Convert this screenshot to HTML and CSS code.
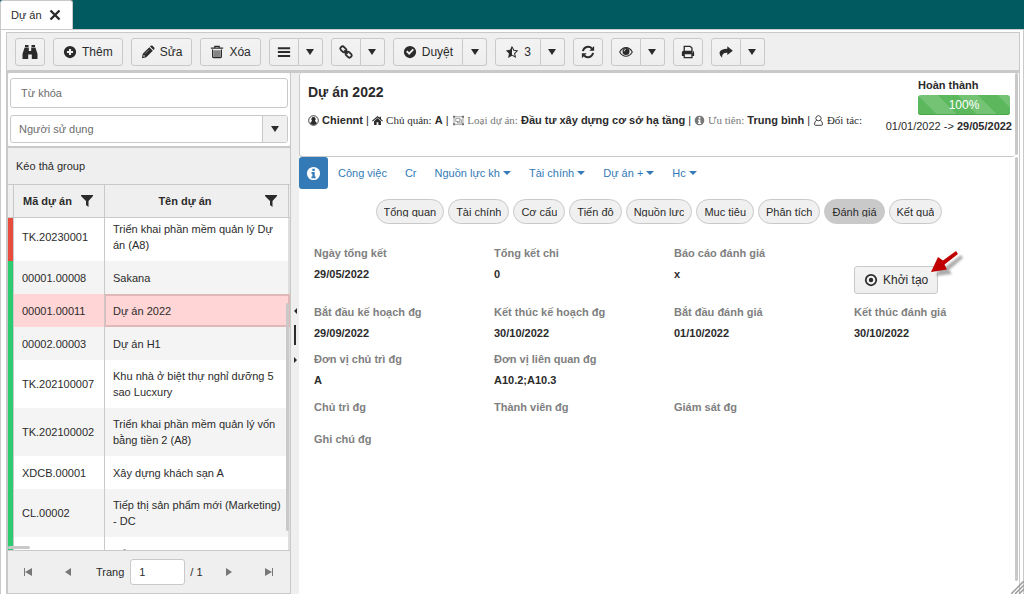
FILE: index.html
```html
<!DOCTYPE html>
<html lang="vi">
<head>
<meta charset="utf-8">
<title>Dự án</title>
<link rel="stylesheet" href="styles.css">
</head>
<body>
<svg class="defs" aria-hidden="true">
  <symbol id="i-search" viewBox="0 0 16 16"><path d="M3 1h3.500v2H3zM9.500 1H13v2H9.500zM2.600 3.600h4.200V7h2.400V3.600h4.200L15.500 10v5H9.800v-4.500H6.200V15H.5v-5z"/></symbol>
  <symbol id="i-plus" viewBox="0 0 16 16"><path fill-rule="evenodd" d="M8 1a7 7 0 1 0 0 14A7 7 0 0 0 8 1zm-1.200 3.500h2.400v2.300h2.300v2.400H9.200v2.300H6.800V9.200H4.500V6.800h2.300z"/></symbol>
  <symbol id="i-pencil" viewBox="0 0 16 16"><path fill-rule="evenodd" d="M1 15l1-5 7.500-7.500 4 4L6 14zm1.600-1.600 2.200-.6-1.600-1.600zM10.300 1.700l.8-.8q1-.8 2 0l2 2q.8 1 0 2l-.8.8z"/><path d="M4.500 10 9 5.500" stroke="#aaa" stroke-width=".8"/></symbol>
  <symbol id="i-trash" viewBox="0 0 16 16"><path d="M1 3.500h14M5.500 3V1.500h5V3M3 5v8q0 1.500 1.500 1.500h7Q13 14.500 13 13V5" fill="none" stroke="currentColor" stroke-width="1.400"/><path d="M4 6h8v8H4z" opacity=".55"/></symbol>
  <symbol id="i-bars" viewBox="0 0 16 16"><path d="M1 2.500h14v2.300H1zM1 6.900h14v2.300H1zM1 11.300h14v2.300H1z"/></symbol>
  <symbol id="i-link" viewBox="0 0 16 16"><g fill="none" stroke="currentColor" stroke-width="2"><rect x="1.200" y="2.500" width="7.500" height="5" rx="2.500" transform="rotate(45 5 5)"/><rect x="7.300" y="8.500" width="7.500" height="5" rx="2.500" transform="rotate(45 11 11)"/><path d="M6 6l4 4"/></g></symbol>
  <symbol id="i-check" viewBox="0 0 16 16"><path fill-rule="evenodd" d="M8 1a7 7 0 1 0 0 14A7 7 0 0 0 8 1zM3.500 7.800 5 6.300l2 2 4-4 1.500 1.500L7 11.300z"/></symbol>
  <symbol id="i-star" viewBox="0 0 16 16"><path d="M8 .8v11.500l-4.400 2.500.9-5L1 6.200l4.900-.7z"/><path d="M8 2l2 4 4 .6-3 2.900.8 4.200L8 11.600" fill="none" stroke="currentColor" stroke-width="1.200"/></symbol>
  <symbol id="i-refresh" viewBox="0 0 16 16"><path d="M2.200 7A6 6 0 0 1 12.500 4M13.800 9A6 6 0 0 1 3.500 12" fill="none" stroke="currentColor" stroke-width="2.200"/><path d="M15 1v5.500H9.500zM1 15V9.500h5.500z"/></symbol>
  <symbol id="i-eye" viewBox="0 0 16 16"><path d="M.8 8Q3.500 3 8 3T15.200 8Q12.500 12.800 8 12.800T.8 8z" fill="none" stroke="currentColor" stroke-width="1.200"/><path fill-rule="evenodd" d="M8 3.300a4 4 0 1 0 0 8 4 4 0 0 0 0-8zm0 1.200v1Q6.400 5.600 6.300 7.200h-1Q5.500 4.600 8 4.500z"/></symbol>
  <symbol id="i-print" viewBox="0 0 16 16"><path d="M3.700 7.500v-6h6.800l2 2v4M3.700 10.500v4h8.800v-4" fill="none" stroke="currentColor" stroke-width="1.500"/><path fill-rule="evenodd" d="M3 6.500h10q2 0 2 2v4h-2.500v-2h-9v2H1v-4q0-2 2-2zm9.500 1v1.200h1.200V7.500z"/></symbol>
  <symbol id="i-share" viewBox="0 0 16 16"><path d="M9.500 1.500 15.800 6.500l-6.300 5V8.800Q3 8.500 3.500 14.500.2 12 .6 8.500 2 4.200 9.500 4.200z"/></symbol>
  <symbol id="i-filter" viewBox="0 0 12 12"><path d="M0 0h12v1L7.500 6v6L5 10V6L0 1z"/></symbol>
  <symbol id="i-down" viewBox="0 0 8 6"><path d="M0 0h8L4 6z"/></symbol>
  <symbol id="i-caret" viewBox="0 0 8 4"><path d="M0 0h8L4 4z"/></symbol>
  <symbol id="i-close" viewBox="0 0 12 12"><path d="M1.500 1.500l9 9M10.500 1.500l-9 9" stroke="currentColor" stroke-width="2.400"/></symbol>
  <symbol id="i-info" viewBox="0 0 16 16"><path fill-rule="evenodd" d="M8 1a7 7 0 1 0 0 14A7 7 0 0 0 8 1zM6.800 3h2.500v2.300H6.800zM5.800 6.500h3.500v4.700h1V13H5.800v-1.800h1V8.300h-1z"/></symbol>
  <symbol id="i-user" viewBox="0 0 16 16"><circle cx="8" cy="8" r="7" fill="none" stroke="currentColor" stroke-width="1.300"/><path d="M8 3a3.200 3.200 0 0 0-2 5.700Q3.500 9.500 3.300 12.500 5 14.500 8 14.500t4.700-2Q12.500 9.500 10 8.700A3.200 3.200 0 0 0 8 3z"/></symbol>
  <symbol id="i-home" viewBox="0 0 16 16"><path d="M8 1.500l3 2.600V2.500h2v3.300l3 2.500-1 1.200-7-6-7 6-1-1.200zM8 4.500l5 4.500v5.500H9.300v-4H6.700v4H3V9z"/></symbol>
  <symbol id="i-group" viewBox="0 0 16 16"><g fill="none" stroke="currentColor"><path d="M1.500 2.500h13v11h-13zM4 5h6v4.500H4zM10 7h2.500v4.500h-6v-2"/></g><path d="M0 1h3v3H0zM13 1h3v3h-3zM0 12h3v3H0zM13 12h3v3h-3z"/></symbol>
  <symbol id="i-person" viewBox="0 0 16 16"><path d="M5.500 7.700a3.800 3.800 0 1 1 5 0M5.500 7.500Q8 9.500 10.500 7.500 14 9 13.800 13.500q0 1.500-1.800 1.500H4q-1.800 0-1.800-1.500Q2 9 5.500 7.500z" fill="none" stroke="currentColor" stroke-width="1.300"/></symbol>
  <symbol id="i-dot" viewBox="0 0 16 16"><circle cx="8" cy="8" r="6" fill="none" stroke="currentColor" stroke-width="2"/><circle cx="8" cy="8" r="2.500"/></symbol>
</svg>
<div class="app">
  <header class="topbar">
    <div class="tab"><span>Dự án</span><button class="tab-close" aria-label="Đóng"><svg><use href="#i-close"/></svg></button></div>
  </header>
  <div class="window">
    <div class="toolbar">
      <button class="btn" aria-label="Tìm kiếm"><svg class="big"><use href="#i-search"/></svg></button>
      <button class="btn text"><svg><use href="#i-plus"/></svg>Thêm</button>
      <button class="btn text"><svg><use href="#i-pencil"/></svg>Sửa</button>
      <button class="btn text"><svg><use href="#i-trash"/></svg>Xóa</button>
      <div class="split"><button class="btn" aria-label="Danh sách"><svg><use href="#i-bars"/></svg></button><button class="btn arrow" aria-label="Mở"><svg><use href="#i-down"/></svg></button></div>
      <div class="split"><button class="btn" aria-label="Liên kết"><svg><use href="#i-link"/></svg></button><button class="btn arrow" aria-label="Mở"><svg><use href="#i-down"/></svg></button></div>
      <div class="split"><button class="btn text"><svg><use href="#i-check"/></svg>Duyệt</button><button class="btn arrow" aria-label="Mở"><svg><use href="#i-down"/></svg></button></div>
      <div class="split"><button class="btn text"><svg><use href="#i-star"/></svg>3</button><button class="btn arrow" aria-label="Mở"><svg><use href="#i-down"/></svg></button></div>
      <button class="btn" aria-label="Làm mới"><svg><use href="#i-refresh"/></svg></button>
      <div class="split"><button class="btn" aria-label="Xem"><svg><use href="#i-eye"/></svg></button><button class="btn arrow" aria-label="Mở"><svg><use href="#i-down"/></svg></button></div>
      <button class="btn" aria-label="In"><svg><use href="#i-print"/></svg></button>
      <div class="split"><button class="btn" aria-label="Chia sẻ"><svg><use href="#i-share"/></svg></button><button class="btn arrow" aria-label="Mở"><svg><use href="#i-down"/></svg></button></div>
    </div>
    <div class="body">
      <aside class="side">
        <div class="search">
          <input class="keyword" type="text" placeholder="Từ khóa" aria-label="Từ khóa">
          <div class="combo"><input type="text" placeholder="Người sử dụng" aria-label="Người sử dụng"><button aria-label="Chọn"><svg><use href="#i-down"/></svg></button></div>
        </div>
        <div class="group">Kéo thả group</div>
        <div class="grid-head">
          <div class="h-stripe"></div>
          <div class="h-code"><span>Mã dự án</span><svg><use href="#i-filter"/></svg></div>
          <div class="h-name"><span>Tên dự án</span><svg><use href="#i-filter"/></svg></div>
        </div>
        <div class="rows">
          <table>
            <tbody>
            <tr><td class="stripe red"></td><td class="code">TK.20230001</td><td class="name">Triển khai phần mềm quản lý Dự án (A8)</td></tr>
            <tr><td class="stripe"></td><td class="code">00001.00008</td><td class="name">Sakana</td></tr>
            <tr class="selected"><td class="stripe"></td><td class="code">00001.00011</td><td class="name">Dự án 2022</td></tr>
            <tr><td class="stripe"></td><td class="code">00002.00003</td><td class="name">Dự án H1</td></tr>
            <tr><td class="stripe"></td><td class="code">TK.202100007</td><td class="name">Khu nhà ở biệt thự nghỉ dưỡng 5 sao Lucxury</td></tr>
            <tr><td class="stripe"></td><td class="code">TK.202100002</td><td class="name">Triển khai phần mềm quản lý vốn bằng tiền 2 (A8)</td></tr>
            <tr><td class="stripe"></td><td class="code">XDCB.00001</td><td class="name">Xây dựng khách sạn A</td></tr>
            <tr><td class="stripe"></td><td class="code">CL.00002</td><td class="name">Tiếp thị sản phẩm mới (Marketing) - DC</td></tr>
            <tr><td class="stripe"></td><td class="code"></td><td class="name">Tổng</td></tr>
            </tbody>
          </table>
          <i class="thumb-v"></i><i class="thumb-h"></i>
        </div>
        <div class="pager">
          <button aria-label="Trang đầu"><svg viewBox="0 0 8 8"><path d="M0 0h1v8H0zM8 0v8L1 4z"/></svg></button>
          <button aria-label="Trang trước"><svg viewBox="0 0 8 8"><path d="M7 0v8L1 4z"/></svg></button>
          <label for="page">Trang</label><input id="page" type="text" value="1"><span>/ 1</span>
          <button class="next" aria-label="Trang sau"><svg viewBox="0 0 8 8"><path d="M1 0v8l6-4z"/></svg></button>
          <button aria-label="Trang cuối"><svg viewBox="0 0 8 8"><path d="M7 0h1v8H7zM0 0v8l7-4z"/></svg></button>
        </div>
      </aside>
      <div class="splitter"><svg viewBox="0 0 8 60"><path d="M6 3v6L3 6zM3 52v6l3-3zM3 20h2v20H3z"/></svg></div>
      <main class="detail">
        <section class="summary">
          <div class="headline">
            <h1>Dự án 2022</h1>
            <div class="meta">
              <svg><use href="#i-user"/></svg> <b>Chiennt</b> | <svg><use href="#i-home"/></svg> <span class="serif">Chủ quản:</span> <b>A</b> | <span class="serif soft"><svg class="wide"><use href="#i-group"/></svg> Loại dự án:</span> <b>Đầu tư xây dựng cơ sở hạ tầng</b> | <span class="serif soft"><svg><use href="#i-info"/></svg> Ưu tiên:</span> <b>Trung bình</b> | <span class="serif"><svg><use href="#i-person"/></svg> Đối tác:</span>
            </div>
          </div>
          <div class="status">
            <b>Hoàn thành</b>
            <div class="progress">100%</div>
            <div class="dates">01/01/2022 -&gt; <b>29/05/2022</b></div>
          </div>
        </section>
        <nav class="nav">
          <a href="#" class="active" aria-label="Thông tin"><svg><use href="#i-info"/></svg></a>
          <a href="#">Công việc</a><a href="#">Cr</a>
          <a href="#">Nguồn lực kh<svg class="caret"><use href="#i-caret"/></svg></a>
          <a href="#">Tài chính<svg class="caret"><use href="#i-caret"/></svg></a>
          <a href="#">Dự án +<svg class="caret"><use href="#i-caret"/></svg></a>
          <a href="#">Hc<svg class="caret"><use href="#i-caret"/></svg></a>
        </nav>
        <div class="pills">
          <button><span>Tổng quan</span></button><button><span>Tài chính</span></button><button><span>Cơ cấu</span></button><button><span>Tiến độ</span></button><button><span>Nguồn lực</span></button><button><span>Mục tiêu</span></button><button><span>Phân tích</span></button><button class="on"><span>Đánh giá</span></button><button><span>Kết quả</span></button>
        </div>
        <dl class="fields">
          <div><dt>Ngày tổng kết</dt><dd>29/05/2022</dd></div>
          <div><dt>Tổng kết chi</dt><dd>0</dd></div>
          <div><dt>Báo cáo đánh giá</dt><dd>x</dd></div>
          <div class="action"><button class="btn text"><svg><use href="#i-dot"/></svg>Khởi tạo</button>
            <svg class="pointer" viewBox="0 0 36 34"><path d="M27 1 11 13 8 8 2 22l16-2-3-4L29 4z" fill="#777" opacity=".6" transform="translate(4 4)" class="shade"/><path d="M26 1 13 10.500 8 7 1 22 17 19.500 14.500 14.500 28 4z" fill="#c00000"/></svg></div>
          <div><dt>Bắt đầu kế hoạch đg</dt><dd>29/09/2022</dd></div>
          <div><dt>Kết thúc kế hoạch đg</dt><dd>30/10/2022</dd></div>
          <div><dt>Bắt đầu đánh giá</dt><dd>01/10/2022</dd></div>
          <div><dt>Kết thúc đánh giá</dt><dd>30/10/2022</dd></div>
          <div><dt>Đơn vị chủ trì đg</dt><dd>A</dd></div>
          <div class="span"><dt>Đơn vị liên quan đg</dt><dd>A10.2;A10.3</dd></div>
          <div><dt>Chủ trì đg</dt></div>
          <div><dt>Thành viên đg</dt></div>
          <div class="end"><dt>Giám sát đg</dt></div>
          <div><dt>Ghi chú đg</dt></div>
        </dl>
        <i class="bar top"></i><i class="bar"></i>
      </main>
    </div>
  </div>
  <svg class="grip" viewBox="0 0 13 13"><path d="M0 13 13 0M4 13l9-9M8 13l5-5" stroke="#999" stroke-width="1.500"/></svg>
</div>
</body>
</html>
```
FILE: styles.css
```css
* { box-sizing: border-box; }
body { margin: 0; background: #fff; color: #2b2b2b; font: 11px/16px "Liberation Sans", Arial, sans-serif; }
svg { fill: currentColor; }
button, input { font: inherit; color: inherit; margin: 0; padding: 0; border: 0; background: none; }
.defs { display: none; }
.app { height: 100vh; display: flex; flex-direction: column; overflow: hidden; position: relative; }
.topbar { background: #005a60; height: 29px; flex: none; display: flex; }
.tab { background: #fff; width: 73px; border: 1px solid #c9c9c9; border-bottom: 0; border-radius: 3px 3px 0 0; display: flex; align-items: center; gap: 7px; padding-left: 10px; }
.tab-close { width: 12px; height: 12px; }
.tab-close svg { width: 12px; height: 12px; display: block; }
.window { flex: 1; min-height: 0; display: flex; flex-direction: column; border: 1px solid #c9c9c9; border-bottom: 0; padding: 2px 3px 0 5px; }
.toolbar { flex: none; height: 41px; border: 1px solid #c9c9c9; border-bottom: 3px solid #c9c9c9; background: #efefef; display: flex; align-items: center; gap: 8px; padding: 0 8px; }
.btn { height: 28px; min-width: 30px; border: 1px solid #c9c9c9; border-radius: 3px; background: linear-gradient(#f3f3f3, #eee); display: flex; align-items: center; justify-content: center; gap: 5px; padding: 0 6px; font-size: 12px; white-space: nowrap; }
.btn.text { padding: 0 9px; }
.btn svg { width: 14px; height: 14px; flex: none; }
.btn svg.big { width: 16px; height: 16px; }
.split { display: flex; }
.split .btn:first-child { border-radius: 3px 0 0 3px; }
.split .arrow { min-width: 24px; border-left: 0; border-radius: 0 3px 3px 0; }
.btn.arrow svg { width: 8px; height: 6px; }
.body { flex: 1; min-height: 0; display: flex; background: #fff; border-right: 1px solid #c9c9c9; padding-right: 1px; }
.side { width: 285px; flex: none; display: flex; flex-direction: column; border: solid #c9c9c9; border-width: 0 1px 1px 2px; background: #efefef; }
.search { background: #fff; padding: 5px 2px 3px; display: flex; flex-direction: column; gap: 7px; border-radius: 3px; }
.keyword { height: 30px; border: 1px solid #c9c9c9; border-radius: 3px; padding: 0 10px; }
.combo { height: 28px; border: 1px solid #c9c9c9; border-radius: 3px; display: flex; overflow: hidden; }
.combo input { flex: 1; min-width: 0; padding: 0 8px; }
.combo button { width: 25px; border-left: 1px solid #c9c9c9; background: #f0f0f0; display: grid; place-items: center; }
.combo svg { width: 8px; height: 6px; }
::placeholder { color: #6c6c6c; opacity: 1; }
input:focus { outline: none; }
.group { height: 38px; flex: none; border-top: 2px solid #c9c9c9; padding: 10px 8px 0; }
.grid-head { height: 34px; flex: none; border: solid #c9c9c9; border-width: 1px 0; display: flex; font-weight: bold; }
.grid-head svg { width: 12px; height: 12px; flex: none; }
.h-stripe { width: 6px; border-right: 1px solid #c9c9c9; }
.h-code { width: 91px; border-right: 1px solid #c9c9c9; display: flex; align-items: center; justify-content: space-between; padding: 0 11px 0 9px; }
.h-name { flex: 1; border-right: 1px solid #c9c9c9; margin-right: 1px; display: flex; align-items: center; padding-right: 11px; }
.h-name span { flex: 1; text-align: center; }
.rows { flex: 1; min-height: 0; overflow: hidden; position: relative; background: #fff; }
.rows table { width: 100%; margin-top: -5px; border-collapse: separate; border-spacing: 0; table-layout: fixed; }
.rows tr { height: 33px; background: #fff; }
.rows tr:nth-child(even) { background: #f4f4f4; }
.rows td { padding: 8px 2px 8px 8px; }
.rows td.stripe { width: 6px; padding: 0; background: #2ecc71; border-right: 1px solid #c9c9c9; }
.rows td.red { background: #e74c3c; }
.rows td.code { width: 91px; border-right: 1px solid #c9c9c9; }
.rows td.name { border-right: 2px solid #dedede; }
.rows tr.selected { background: #ffd5d5; }
.rows tr.selected .name { padding: 6px 2px 6px 7px; border: 2px solid #e0b8b8; border-left-width: 1px; }
.thumb-v { position: absolute; right: 1px; top: 85px; width: 3px; height: 228px; border-radius: 2px; background: #c9c9c9; }
.thumb-h { position: absolute; left: 0; bottom: 1px; width: 22px; height: 3px; border-radius: 2px; background: #c9c9c9; }
.pager { flex: none; height: 43px; border-top: 1px solid #c9c9c9; display: flex; align-items: center; padding: 0 10px; white-space: nowrap; }
.pager button { width: 20px; height: 20px; display: grid; place-items: center; color: #777; flex: none; }
.pager button + button { margin-left: 20px; }
.pager svg { width: 8px; height: 8px; }
.pager label { margin-left: 18px; }
.pager input { width: 55px; height: 26px; flex: none; margin: 0 5px 0 6px; border: 1px solid #c9c9c9; border-radius: 3px; background: #fff; padding: 0 8px; }
.pager .next { margin-left: 16px; }
.splitter { width: 8px; flex: none; background: #efefef; display: flex; align-items: flex-start; padding-top: 232px; }
.splitter svg { width: 8px; height: 60px; }
.detail { flex: 1; min-width: 0; background: #fff; position: relative; padding-right: 3px; }
.summary { height: 84px; border: 1px solid #c9c9c9; border-top: 0; border-right: 0; border-radius: 3px; display: flex; justify-content: space-between; padding: 4px 3px 0 8px; white-space: nowrap; }
h1 { font-size: 14px; line-height: 20px; margin: 5px 0 10px; }
.meta svg { width: 11px; height: 11px; vertical-align: -2px; }
.meta svg.wide { width: 13px; }
.serif { font-family: "Liberation Serif", serif; }
.soft { color: #777; }
.status { display: flex; flex-direction: column; align-items: flex-end; }
.status > b { width: 92px; margin-right: 2px; }
.progress { width: 92px; height: 20px; margin: 2px 2px 3px 0; border-radius: 3px; color: #fff; font-size: 12px; line-height: 20px; text-align: center; background: linear-gradient(45deg, #74c374 25%, #5cb85c 25% 50%, #74c374 50% 75%, #5cb85c 75%) 0 0 / 40px 40px; box-shadow: inset 0 -1px #4da74d; }
.nav { display: flex; height: 32px; }
.nav a { color: #337ab7; text-decoration: none; padding: 8px 9px; display: flex; align-items: center; white-space: nowrap; }
.nav a.active { background: #337ab7; color: #fff; border-radius: 3px; width: 29px; margin-right: 1px; padding: 0 7px; }
.nav a svg { width: 15px; height: 15px; flex: none; }
.nav a svg.caret { width: 8px; height: 4px; margin-left: 3px; }
.pills { display: flex; justify-content: center; gap: 4px; padding: 10px 0 0 4px; }
.pills button { height: 25px; border: 1px solid #c9c9c9; border-radius: 13px; background: #f0f0f0; padding: 1px 7px 0; }
.pills span { display: block; height: 10px; line-height: 10px; overflow: hidden; white-space: nowrap; }
.pills .on { background: #c9c9c9; }
.fields { margin: 21px 0 0 15px; display: grid; grid-template-columns: repeat(4, 180px); grid-template-rows: 59px 47px 48px 32px 32px; }
dt { font-weight: bold; color: #808080; }
dd { margin: 5px 0 0; font-weight: bold; }
.span { grid-column: span 3; }
.end { grid-column: span 2; }
.action { padding-top: 21px; display: flex; align-items: flex-start; position: relative; }
.pointer { position: absolute; left: 76px; top: 5px; width: 36px; height: 34px; }
.shade { filter: blur(1px); }
.bar { position: absolute; right: 0; top: 84px; bottom: 13px; width: 3px; border-radius: 2px; background: #c9c9c9; }
.bar.top { top: 0; bottom: auto; height: 82px; }
.grip { position: absolute; right: 0; bottom: 0; width: 13px; height: 13px; }
```
